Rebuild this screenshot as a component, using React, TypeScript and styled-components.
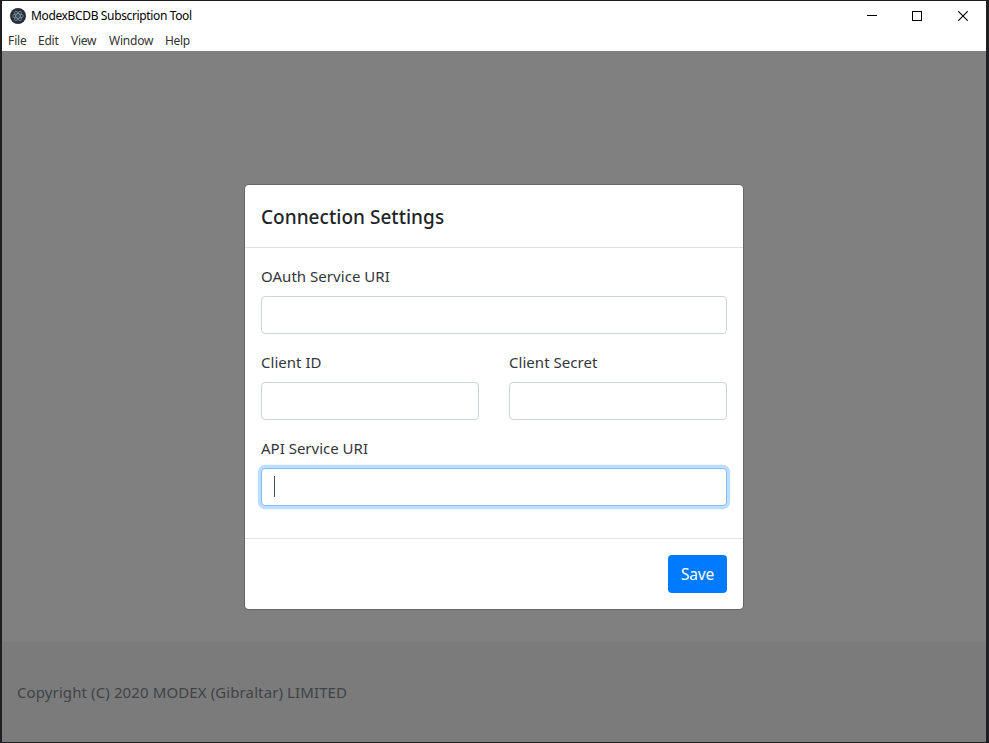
import React from "react";
import styled, { createGlobalStyle } from "styled-components";

const GlobalStyle = createGlobalStyle`
  * { box-sizing: border-box; }
  html, body { margin: 0; padding: 0; background: #1f1e20; }
`;

const AppWindow = styled.div`
  display: grid;
  grid-template-rows: 29px 21px 1fr;
  width: 989px;
  height: 743px;
  overflow: hidden;
  border-style: solid;
  border-width: 1px 3px 1px 2px;
  border-color: #1f1e20;
  background: #fff;
  color: #212529;
  font-family: "Noto Sans", "Open Sans", sans-serif;
`;

const TitleBar = styled.header`
  display: flex;
  align-items: center;
  padding-left: 8px;
`;

const Tracked = styled.span<{ $spacing: number }>`
  letter-spacing: ${(p) => p.$spacing}px;
  white-space: nowrap;
`;

const WindowTitle = styled.div`
  flex: 1;
  margin-left: 5px;
  color: #000;
  font-size: 12px;
  line-height: 16px;
`;

const WindowControls = styled.div`
  display: flex;
  height: 29px;
`;

const ControlButton = styled.button`
  display: grid;
  place-items: center;
  width: 46px;
  height: 29px;
  padding: 0;
  border: 0;
  background: transparent;
`;

const MenuBar = styled.nav`
  display: flex;
  align-items: center;
  padding-left: 6px;
`;

const MenuItem = styled.span<{ $width: number }>`
  width: ${(p) => p.$width}px;
  color: #333;
  font-size: 12px;
  line-height: 20px;
`;

const Backdrop = styled.main`
  display: grid;
  grid-template-rows: 133px 1fr 100px;
  justify-items: center;
  background: #808080;
`;

const Dialog = styled.section`
  grid-row: 2;
  width: 500px;
  height: 426px;
  border: 1px solid rgba(0, 0, 0, 0.2);
  border-radius: 4.8px;
  background: #fff;
  background-clip: padding-box;
`;

const DialogHeader = styled.div`
  padding: 17px 16px 15px;
  border-bottom: 1px solid #dee2e6;
`;

const DialogTitle = styled.h5`
  margin: 0;
  font-size: 19px;
  font-weight: 500;
  line-height: 30px;
`;

const DialogBody = styled.form`
  padding: 16px;
`;

const FieldRow = styled.div`
  display: grid;
  grid-template-columns: 1fr 1fr;
  gap: 30px;
`;

const Field = styled.div`
  margin-bottom: 16px;
`;

const Label = styled.label`
  display: block;
  margin-bottom: 8px;
  color: #33373b;
  font-size: 15px;
  line-height: 24px;
`;

const TextBox = styled.div<{ $focused?: boolean }>`
  display: flex;
  align-items: flex-start;
  height: 38px;
  padding: 7px 12px;
  border: 1px solid ${(p) => (p.$focused ? "#80bdff" : "#ced4da")};
  border-radius: 4px;
  background: #fff;
  box-shadow: ${(p) => (p.$focused ? "0 0 0 3.2px rgba(0, 123, 255, 0.25)" : "none")};
`;

const Caret = styled.span`
  width: 1px;
  height: 21px;
  background: #495057;
`;

const DialogFooter = styled.div`
  display: flex;
  justify-content: flex-end;
  padding: 16px;
  border-top: 1px solid #dee2e6;
`;

const SaveButton = styled.button`
  width: 59px;
  height: 38px;
  padding: 0;
  border: 0;
  border-radius: 4px;
  background: #007bff;
  color: #fff;
  font-family: inherit;
  font-size: 15.5px;
  line-height: 24px;
`;

const PageFooter = styled.footer`
  grid-row: 3;
  justify-self: stretch;
  display: flex;
  align-items: center;
  padding-left: 15px;
  background: #7b7b7b;
  color: #404346;
  font-size: 15px;
  line-height: 24px;
`;

const ElectronIcon = () => (
  <svg width="16" height="16" viewBox="0 0 16 16" fill="none">
    <circle cx="8" cy="8" r="8" fill="#2b2e3a" />
    <g stroke="#9fc5cf" strokeWidth="0.6" strokeOpacity="0.85">
      <ellipse cx="8" cy="8" rx="5.3" ry="2.1" />
      <ellipse cx="8" cy="8" rx="5.3" ry="2.1" transform="rotate(60 8 8)" />
      <ellipse cx="8" cy="8" rx="5.3" ry="2.1" transform="rotate(120 8 8)" />
    </g>
    <circle cx="8" cy="8" r="0.5" fill="#9fc5cf" />
  </svg>
);

const MinimizeIcon = () => (
  <svg width="12" height="10" viewBox="0 0 12 10" shapeRendering="crispEdges">
    <path d="M2 4.5h10" stroke="#000" />
  </svg>
);

const MaximizeIcon = () => (
  <svg width="10" height="10" viewBox="0 0 10 10" shapeRendering="crispEdges">
    <rect x="0.5" y="0.5" width="9" height="9" fill="none" stroke="#000" />
  </svg>
);

const CloseIcon = () => (
  <svg width="10" height="10" viewBox="0 0 10 10">
    <path d="M0.2 0.2l9.6 9.6M9.8 0.2l-9.6 9.6" stroke="#000" strokeWidth="1.1" />
  </svg>
);

const menuItems = [
  { label: "File", width: 30, spacing: -0.1 },
  { label: "Edit", width: 33, spacing: -0.25 },
  { label: "View", width: 38, spacing: -0.3 },
  { label: "Window", width: 56, spacing: -0.2 },
  { label: "Help", width: 30, spacing: -0.3 },
];

export default function App() {
  return (
    <>
      <GlobalStyle />
      <AppWindow>
        <TitleBar>
          <ElectronIcon />
          <WindowTitle>
            <Tracked $spacing={-0.36}>ModexBCDB Subscription Tool</Tracked>
          </WindowTitle>
          <WindowControls>
            <ControlButton aria-label="Minimize"><MinimizeIcon /></ControlButton>
            <ControlButton aria-label="Maximize"><MaximizeIcon /></ControlButton>
            <ControlButton aria-label="Close"><CloseIcon /></ControlButton>
          </WindowControls>
        </TitleBar>
        <MenuBar>
          {menuItems.map((item) => (
            <MenuItem key={item.label} $width={item.width}>
              <Tracked $spacing={item.spacing}>{item.label}</Tracked>
            </MenuItem>
          ))}
        </MenuBar>
        <Backdrop>
          <Dialog role="dialog">
            <DialogHeader>
              <DialogTitle>
                <Tracked $spacing={0.03}>Connection Settings</Tracked>
              </DialogTitle>
            </DialogHeader>
            <DialogBody>
              <Field>
                <Label><Tracked $spacing={0.04}>OAuth Service URI</Tracked></Label>
                <TextBox />
              </Field>
              <FieldRow>
                <Field>
                  <Label><Tracked $spacing={0.03}>Client ID</Tracked></Label>
                  <TextBox />
                </Field>
                <Field>
                  <Label><Tracked $spacing={0.04}>Client Secret</Tracked></Label>
                  <TextBox />
                </Field>
              </FieldRow>
              <Field>
                <Label><Tracked $spacing={0}>API Service URI</Tracked></Label>
                <TextBox $focused><Caret /></TextBox>
              </Field>
            </DialogBody>
            <DialogFooter>
              <SaveButton type="button">
                <Tracked $spacing={-0.2}>Save</Tracked>
              </SaveButton>
            </DialogFooter>
          </Dialog>
          <PageFooter>
            <Tracked $spacing={0.11}>Copyright (C) 2020 MODEX (Gibraltar) LIMITED</Tracked>
          </PageFooter>
        </Backdrop>
      </AppWindow>
    </>
  );
}
